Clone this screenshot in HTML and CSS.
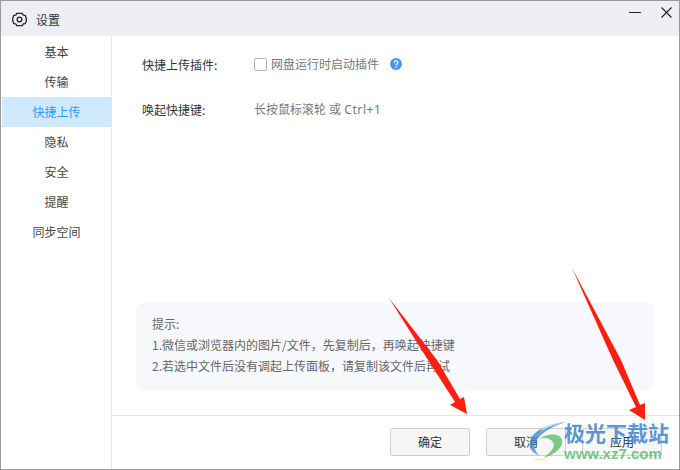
FILE: index.html
```html
<!DOCTYPE html>
<html lang="zh-CN">
<head>
  <meta charset="UTF-8">
  <title>设置</title>
  <link rel="stylesheet" href="styles.css">
</head>
<body>

<div class="window">
  <!-- 标题栏 -->
  <div class="titlebar">
    <svg class="gear" width="15" height="15" viewBox="0 0 16 16" fill="none" stroke="#222" stroke-width="1.400" stroke-linejoin="round">
      <path d="M5 1.500h6l1 1.900 2.200.2L15.500 8l-1.300 4.400-2.200.2-1 1.900H5l-1-1.900-2.200-.2L.5 8l1.300-4.400 2.200-.2z"/>
      <circle cx="8" cy="8" r="2.500"/>
    </svg>
    <span class="title">设置</span>
    <div class="win-btns">
      <svg width="12" height="12" viewBox="0 0 12 12" stroke="#222" stroke-width="1"><path d="M0 5.500h12"/></svg>
      <svg width="11" height="11" viewBox="0 0 11 11" stroke="#222" stroke-width="1.100"><path d="M.5.5l10 10M10.500.5l-10 10"/></svg>
    </div>
  </div>

  <div class="main">
    <!-- 左侧菜单 -->
    <div class="sidebar">
      <div class="menu-item">基本</div>
      <div class="menu-item">传输</div>
      <div class="menu-item active">快捷上传</div>
      <div class="menu-item">隐私</div>
      <div class="menu-item">安全</div>
      <div class="menu-item">提醒</div>
      <div class="menu-item">同步空间</div>
    </div>

    <div class="content">
      <div class="settings">
        <div class="row">
          <div class="label">快捷上传插件:</div>
          <span class="checkbox"></span>
          <span class="value">网盘运行时启动插件</span>
          <svg class="help" width="12" height="12" viewBox="0 0 12 12">
            <circle cx="6" cy="6" r="6" fill="#4f94ef"/>
            <path d="M4.200 4.700c0-2.300 3.700-2.300 3.700-.1 0 1.300-1.900 1.300-1.900 2.700" fill="none" stroke="#fff" stroke-width="1.200"/>
            <circle cx="6" cy="9.100" r=".8" fill="#fff"/>
          </svg>
        </div>
        <div class="row">
          <div class="label">唤起快捷键:</div>
          <span class="value">长按鼠标滚轮 或 <span class="hotkey">Ctrl+1</span></span>
        </div>
      </div>

      <div class="tips">
        <div>提示:</div>
        <div>1.微信或浏览器内的图片/文件，先复制后，再唤起快捷键</div>
        <div>2.若选中文件后没有调起上传面板，请复制该文件后再试</div>
      </div>

      <div class="footer">
        <button class="btn">确定</button>
        <button class="btn">取消</button>
        <button class="btn">应用</button>
      </div>
    </div>
  </div>
</div>

<!-- 截图上的红色箭头 -->
<svg class="arrows" width="680" height="470" viewBox="0 0 680 470">
  <path fill="#fb1f12" d="M389 298 L437 360 L460 399 L464 397 L467 414 L450 405 L455 402 L428 360 Z"/>
  <path fill="#fb1f12" d="M572 268 L621 360 L640 405 L645 403 L645 420 L629 410 L636 407 L613 360 Z"/>
</svg>

<!-- 水印 -->
<div class="watermark">
  <svg class="wm-logo" width="44" height="44" viewBox="0 0 44 44">
    <path fill="#3f86cf" d="M43 3C23 6 6 13 8 28 9 32 13 35 17 36 11 31 11 24 18 17 25 10 35 6 43 3Z"/>
    <path fill="#9fd4ee" d="M43 3C34 4 26 6 20 9L19 12C26 8 35 5 43 3Z"/>
    <path fill="#57b765" d="M17 20C26 14 38 14 40 21 42 29 30 37 21 39 28 34 34 28 31 23 28 19 22 18 17 20Z"/>
    <path fill="#f0e46e" d="M8 39C16 41 24 41 30 37 24 42 15 43 8 39Z"/>
  </svg>
  <div class="wm-text">
    <div class="wm-name">极光下载站</div>
    <div class="wm-url">www.xz7.com</div>
  </div>
</div>

</body>
</html>
```

FILE: styles.css
```css
body {
  margin: 0;
  width: 680px;
  height: 470px;
  overflow: hidden;
  font-family: "Noto Sans CJK SC", "Liberation Sans", sans-serif;
  font-size: 12px;
  color: #333;
  background: white;
}
.window {
  box-sizing: border-box;
  width: 680px;
  height: 470px;
  border: 1px solid #9a9a9a;
  display: flex;
  flex-direction: column;
}
.titlebar {
  height: 35px;
  flex: none;
  background: #eeeff5;
  display: flex;
  align-items: center;
  padding: 0 7px 0 11px;
}
.gear { margin-top: 1px; }
.title {
  margin-left: 9px;
  margin-top: 1px;
  font-size: 12px;
  color: #333;
}
.win-btns {
  margin-left: auto;
  margin-top: -12px;
  display: flex;
  align-items: center;
  gap: 20px;
}
.main {
  flex: 1;
  display: flex;
  min-height: 0;
}
.sidebar {
  width: 111px;
  flex: none;
  box-sizing: border-box;
  border-right: 1px solid #e4e4e4;
  padding: 1px 0 0 1px;
}
.menu-item {
  height: 30px;
  line-height: 30px;
  text-align: center;
  color: #444;
}
.menu-item.active {
  background: #cfeaff;
  color: #2f9bf0;
}
.content {
  flex: 1;
  display: flex;
  flex-direction: column;
  min-width: 0;
}
.settings {
  flex: 1;
  padding: 16px 0 0 30px;
}
.row {
  height: 24px;
  margin-bottom: 21px;
  display: flex;
  align-items: center;
}
.label {
  width: 112px;
  flex: none;
  color: #333;
}
.checkbox {
  box-sizing: border-box;
  width: 13px;
  height: 13px;
  border: 1px solid #b4b4b4;
  border-radius: 2px;
  margin-right: 4px;
}
.value {
  font-family: "Noto Sans", "Noto Sans CJK SC", sans-serif;
  color: #777;
}
.hotkey { letter-spacing: .6px; }
.help { margin-left: 11px; }
.tips {
  margin: 0 25px 24px 24px;
  padding: 10px 16px 14px;
  height: 64px;
  background: #f7f8fc;
  border-radius: 8px;
  line-height: 21px;
  color: #666;
}
.footer {
  height: 54px;
  flex: none;
  box-sizing: border-box;
  border-top: 1px solid #e4e4e4;
  display: flex;
  justify-content: flex-end;
  align-items: flex-start;
  gap: 16px;
  padding: 12px 17px 0 0;
}
.btn {
  width: 80px;
  height: 28px;
  padding: 0 0 2px;
  background: #f6f6f6;
  border: 1px solid #cfcfcf;
  border-radius: 2px;
  font: inherit;
  color: #333;
}
.arrows {
  position: absolute;
  left: 0;
  top: 0;
}
.watermark {
  position: absolute;
  left: 522px;
  top: 419px;
  display: flex;
}
.wm-logo {
  margin-right: -2px;
  opacity: .75;
}
.wm-name {
  font-size: 21px;
  line-height: 26px;
  font-weight: 700;
  color: #4d8fcf;
  opacity: .92;
}
.wm-url {
  font-family: "Liberation Sans", sans-serif;
  font-size: 15px;
  line-height: 18px;
  font-weight: 700;
  color: #6cc07c;
  opacity: .9;
}
```
